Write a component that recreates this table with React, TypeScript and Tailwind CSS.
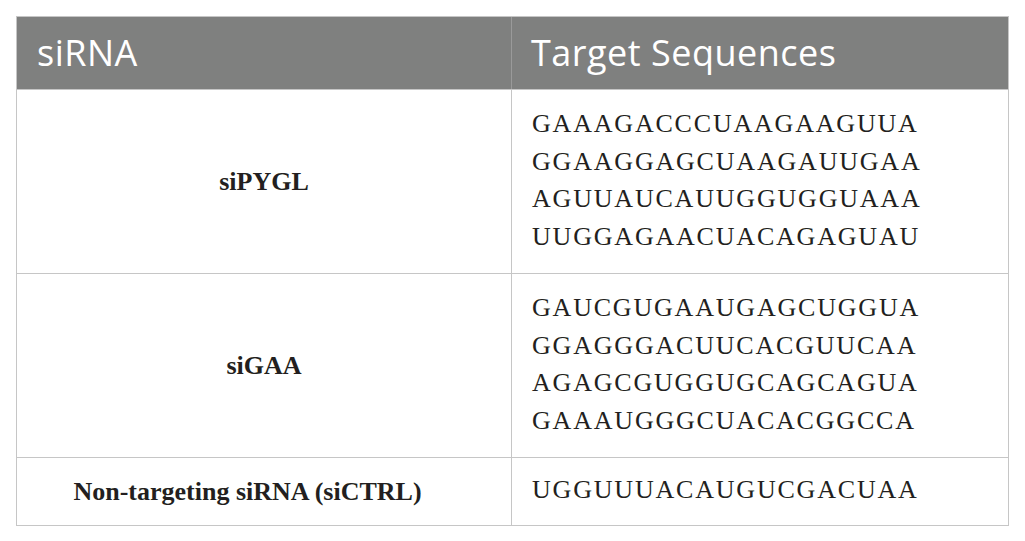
import React from "react";

const rows = [
  { name: "siPYGL", seqs: ["GAAAGACCCUAAGAAGUUA", "GGAAGGAGCUAAGAUUGAA", "AGUUAUCAUUGGUGGUAAA", "UUGGAGAACUACAGAGUAU"], h: "h-[184px]", pr: "" },
  { name: "siGAA", seqs: ["GAUCGUGAAUGAGCUGGUA", "GGAGGGACUUCACGUUCAA", "AGAGCGUGGUGCAGCAGUA", "GAAAUGGGCUACACGGCCA"], h: "h-[184px]", pr: "" },
  { name: "Non-targeting siRNA (siCTRL)", seqs: ["UGGUUUACAUGUCGACUAA"], h: "h-[68px]", pr: "pr-[33px]" },
];

export default function App() {
  return (
    <div className="w-[1025px] h-[541px] bg-white pt-[16px] pl-[16px]">
      <div className="w-[993px] border border-[#c6c6c6]">
        <div className="grid grid-cols-[495px_1fr] h-[72px] bg-[#7f807f] text-white text-[36px] tracking-[0.5px] font-['Open_Sans',sans-serif]">
          <div className="flex items-center pl-[20px] border-r border-[#9a9a9a]">siRNA</div>
          <div className="flex items-center pl-[19px]">Target Sequences</div>
        </div>
        {rows.map((r, i) => (
          <div key={i} className={`grid grid-cols-[495px_1fr] ${r.h} border-t border-[#c6c6c6] text-[#231f20]`}>
            <div className={`flex items-center justify-center border-r border-[#c6c6c6] font-['Liberation_Serif',serif] font-bold text-[26px] ${r.pr}`}>
              {r.name}
            </div>
            <div className="flex flex-col justify-center pl-[20px] pb-[3px] font-['Liberation_Serif',serif] text-[26px] leading-[37.5px] tracking-[1.8px]">
              {r.seqs.map((s) => (
                <div key={s}>{s}</div>
              ))}
            </div>
          </div>
        ))}
      </div>
    </div>
  );
}
